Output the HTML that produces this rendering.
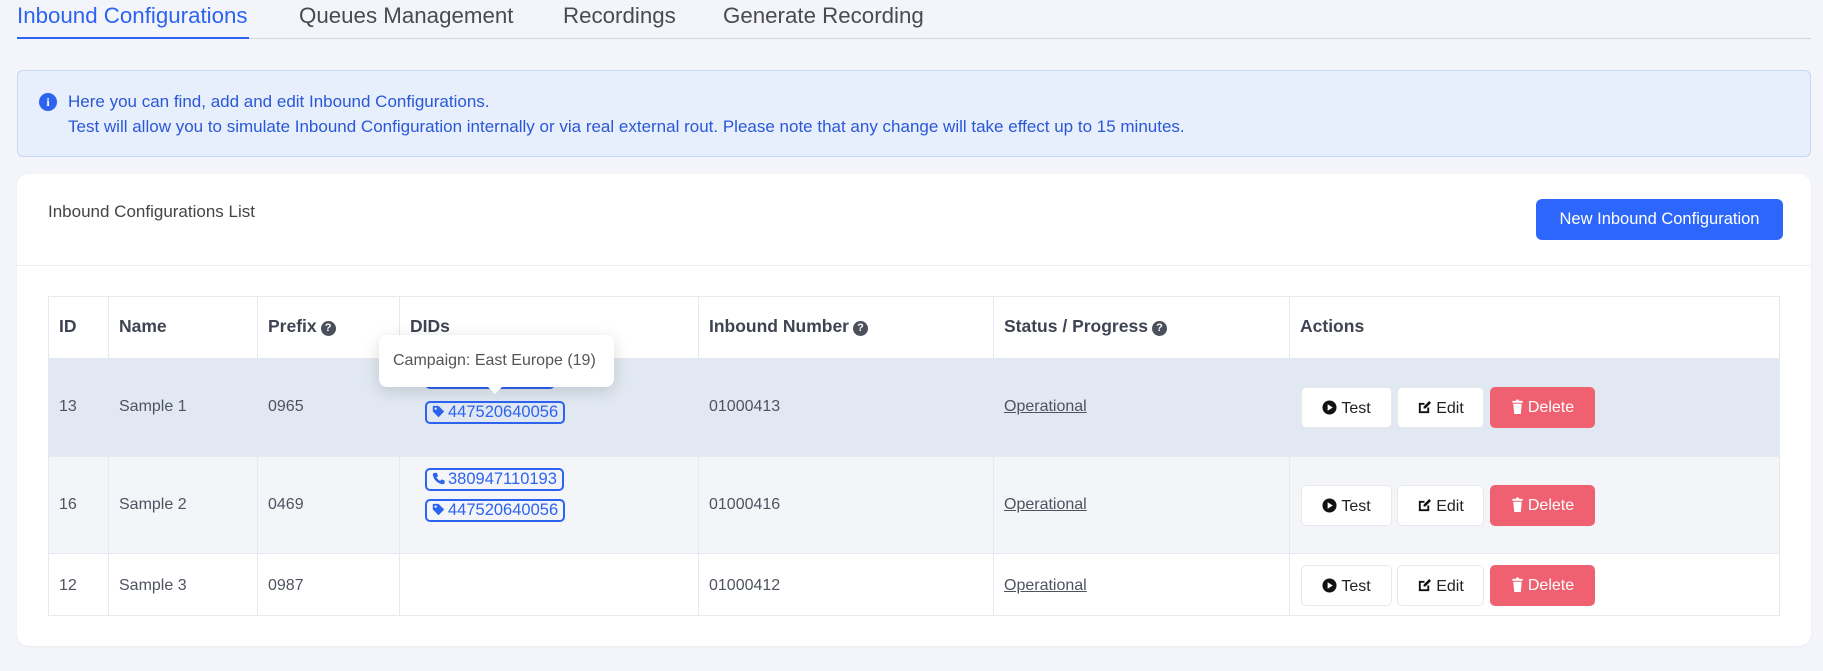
<!DOCTYPE html>
<html><head><meta charset="utf-8"><style>
*{box-sizing:border-box;margin:0;padding:0}
body{width:1823px;height:671px;background:#f4f5fa;font-family:"Liberation Sans",sans-serif;color:#4a4f5c;position:relative;overflow:hidden}
.a{position:absolute}
.tab{position:absolute;top:3px;font-size:22.3px;color:#4a4a52;white-space:nowrap}
.cell{position:absolute;font-size:16px;color:#4e5360;white-space:nowrap}
.th{position:absolute;font-size:17.5px;font-weight:bold;color:#3f4452;white-space:nowrap}
.q{display:inline-block;width:15px;height:15px;border-radius:50%;background:#4a4f5c;color:#fff;font-size:11px;text-align:center;line-height:15px;vertical-align:1px;margin-left:4px}
.badge{position:absolute;left:425px;height:23px;border:2px solid #2c63f0;border-radius:5px;color:#2c63f0;font-size:16.5px;line-height:19px;padding:0 5px 0 5px;white-space:nowrap}
.badge svg{vertical-align:-1px;margin-right:3px}
.btn{position:absolute;height:41px;border-radius:5px;font-size:16px;line-height:41px;text-align:center;color:#222;background:#fff;border:1px solid #e6e8ee}
.btn svg{vertical-align:-2px;margin-right:4px}
.del{background:#ef6170;color:#fff;border:none}
.op{position:absolute;left:1004px;font-size:16px;color:#4e5360;text-decoration:underline}
</style></head><body>
<div class="tab" style="left:17px;color:#2c63f0">Inbound Configurations</div>
<div class="tab" style="left:299px">Queues Management</div>
<div class="tab" style="left:563px">Recordings</div>
<div class="tab" style="left:723px">Generate Recording</div>
<div class="a" style="left:17px;top:38px;width:1794px;height:1px;background:#d4d6dc"></div>
<div class="a" style="left:17px;top:37px;width:232px;height:2px;background:#2c63f0"></div>

<div class="a" style="left:17px;top:70px;width:1794px;height:87px;background:#e7eefc;border:1px solid #c6d6f4;border-radius:6px"></div>
<div class="a" style="left:39px;top:93px;width:18px;height:18px;border-radius:50%;background:#2c63f0;color:#fff;font-size:12px;font-weight:bold;text-align:center;line-height:18px;font-family:'Liberation Serif',serif">i</div>
<div class="a" style="left:68px;top:92px;font-size:17px;color:#2a58d6">Here you can find, add and edit Inbound Configurations.</div>
<div class="a" style="left:68px;top:117px;font-size:17px;color:#2a58d6">Test will allow you to simulate Inbound Configuration internally or via real external rout. Please note that any change will take effect up to 15 minutes.</div>

<div class="a" style="left:17px;top:174px;width:1794px;height:472px;background:#fff;border-radius:12px;box-shadow:0 1px 3px rgba(0,0,0,.05)"></div>
<div class="a" style="left:48px;top:202px;font-size:17px;color:#444">Inbound Configurations List</div>
<div class="a" style="left:1536px;top:199px;width:247px;height:41px;background:#2c66fa;border-radius:6px;color:#fff;font-size:16.5px;text-align:center;line-height:41px">New Inbound Configuration</div>
<div class="a" style="left:17px;top:265px;width:1794px;height:1px;background:#edeef2"></div>

<div class="a" style="left:48px;top:296px;width:1732px;height:320px;border:1px solid #e6e9ef"></div>
<div class="a" style="left:49px;top:358px;width:1730px;height:98px;background:#e1e8f2"></div>
<div class="a" style="left:49px;top:456px;width:1730px;height:97px;background:#f3f5f9"></div>
<div class="a" style="left:49px;top:358px;width:1730px;height:1px;background:#e6e9ef"></div>
<div class="a" style="left:49px;top:456px;width:1730px;height:1px;background:#e6e9ef"></div>
<div class="a" style="left:49px;top:553px;width:1730px;height:1px;background:#e6e9ef"></div>
<div class="a" style="left:108px;top:296px;width:1px;height:320px;background:#e6e9ef"></div>
<div class="a" style="left:257px;top:296px;width:1px;height:320px;background:#e6e9ef"></div>
<div class="a" style="left:399px;top:296px;width:1px;height:320px;background:#e6e9ef"></div>
<div class="a" style="left:698px;top:296px;width:1px;height:320px;background:#e6e9ef"></div>
<div class="a" style="left:993px;top:296px;width:1px;height:320px;background:#e6e9ef"></div>
<div class="a" style="left:1289px;top:296px;width:1px;height:320px;background:#e6e9ef"></div>

<div class="th" style="left:59px;top:316px">ID</div>
<div class="th" style="left:119px;top:316px">Name</div>
<div class="th" style="left:268px;top:316px">Prefix<span class="q">?</span></div>
<div class="th" style="left:410px;top:316px">DIDs</div>
<div class="th" style="left:709px;top:316px">Inbound Number<span class="q">?</span></div>
<div class="th" style="left:1004px;top:316px">Status / Progress<span class="q">?</span></div>
<div class="th" style="left:1300px;top:316px">Actions</div>

<div class="cell" style="left:59px;top:398px">13</div>
<div class="cell" style="left:119px;top:398px">Sample 1</div>
<div class="cell" style="left:268px;top:398px">0965</div>
<div class="cell" style="left:709px;top:398px">01000413</div>
<div class="op" style="top:398px">Operational</div>
<div class="badge" style="top:366px;width:130px"></div>
<div class="badge" style="top:401px"><svg width="13" height="13" viewBox="0 0 16 16"><path d="M1 1h7l7 7-7 7-7-7z" fill="#2c63f0"/><circle cx="4.5" cy="4.5" r="1.5" fill="#e1e8f2"/></svg>447520640056</div>

<div class="cell" style="left:59px;top:496px">16</div>
<div class="cell" style="left:119px;top:496px">Sample 2</div>
<div class="cell" style="left:268px;top:496px">0469</div>
<div class="cell" style="left:709px;top:496px">01000416</div>
<div class="op" style="top:496px">Operational</div>
<div class="badge" style="top:468px"><svg width="13" height="13" viewBox="0 0 16 16"><path d="M3 1l3 0 1.5 4-2 1.5c1 2 2.5 3.5 4.5 4.5l1.5-2 4 1.5v3c0 1-1 1.5-2 1.5C7 14.5 1.5 9 1 3c0-1 1-2 2-2z" fill="#2c63f0"/></svg>380947110193</div>
<div class="badge" style="top:499px"><svg width="13" height="13" viewBox="0 0 16 16"><path d="M1 1h7l7 7-7 7-7-7z" fill="#2c63f0"/><circle cx="4.5" cy="4.5" r="1.5" fill="#f3f5f9"/></svg>447520640056</div>

<div class="cell" style="left:59px;top:577px">12</div>
<div class="cell" style="left:119px;top:577px">Sample 3</div>
<div class="cell" style="left:268px;top:577px">0987</div>
<div class="cell" style="left:709px;top:577px">01000412</div>
<div class="op" style="top:577px">Operational</div>

<div class="btn" style="left:1301px;top:387px;width:91px"><svg width="15" height="15" viewBox="0 0 16 16"><circle cx="8" cy="8" r="7.5" fill="#111"/><path d="M6 4.5v7l5.5-3.5z" fill="#fff"/></svg>Test</div>
<div class="btn" style="left:1397px;top:387px;width:87px"><svg width="15" height="15" viewBox="0 0 16 16"><path d="M2 3h6v2H4v7h7V8h2v6H2z" fill="#111"/><path d="M7 7l6-6 2 2-6 6H7z" fill="#111"/></svg>Edit</div>
<div class="btn del" style="left:1490px;top:387px;width:105px"><svg width="13" height="15" viewBox="0 0 13 16"><path d="M1 2h3.5l1-1.5h2l1 1.5H12v2H1zM2 5h9l-1 11H3z" fill="#fff"/></svg>Delete</div>
<div class="btn" style="left:1301px;top:485px;width:91px"><svg width="15" height="15" viewBox="0 0 16 16"><circle cx="8" cy="8" r="7.5" fill="#111"/><path d="M6 4.5v7l5.5-3.5z" fill="#fff"/></svg>Test</div>
<div class="btn" style="left:1397px;top:485px;width:87px"><svg width="15" height="15" viewBox="0 0 16 16"><path d="M2 3h6v2H4v7h7V8h2v6H2z" fill="#111"/><path d="M7 7l6-6 2 2-6 6H7z" fill="#111"/></svg>Edit</div>
<div class="btn del" style="left:1490px;top:485px;width:105px"><svg width="13" height="15" viewBox="0 0 13 16"><path d="M1 2h3.5l1-1.5h2l1 1.5H12v2H1zM2 5h9l-1 11H3z" fill="#fff"/></svg>Delete</div>
<div class="btn" style="left:1301px;top:565px;width:91px"><svg width="15" height="15" viewBox="0 0 16 16"><circle cx="8" cy="8" r="7.5" fill="#111"/><path d="M6 4.5v7l5.5-3.5z" fill="#fff"/></svg>Test</div>
<div class="btn" style="left:1397px;top:565px;width:87px"><svg width="15" height="15" viewBox="0 0 16 16"><path d="M2 3h6v2H4v7h7V8h2v6H2z" fill="#111"/><path d="M7 7l6-6 2 2-6 6H7z" fill="#111"/></svg>Edit</div>
<div class="btn del" style="left:1490px;top:565px;width:105px"><svg width="13" height="15" viewBox="0 0 13 16"><path d="M1 2h3.5l1-1.5h2l1 1.5H12v2H1zM2 5h9l-1 11H3z" fill="#fff"/></svg>Delete</div>

<div class="a" style="left:379px;top:335px;width:235px;height:52px;background:#fff;border-radius:8px;box-shadow:0 4px 16px rgba(0,0,0,.15);font-size:16px;color:#555;line-height:52px;padding-left:14px">Campaign: East Europe (19)</div>
<div class="a" style="left:487px;top:386px;width:0;height:0;border-left:8px solid transparent;border-right:8px solid transparent;border-top:8px solid #fff"></div>
</body></html>
